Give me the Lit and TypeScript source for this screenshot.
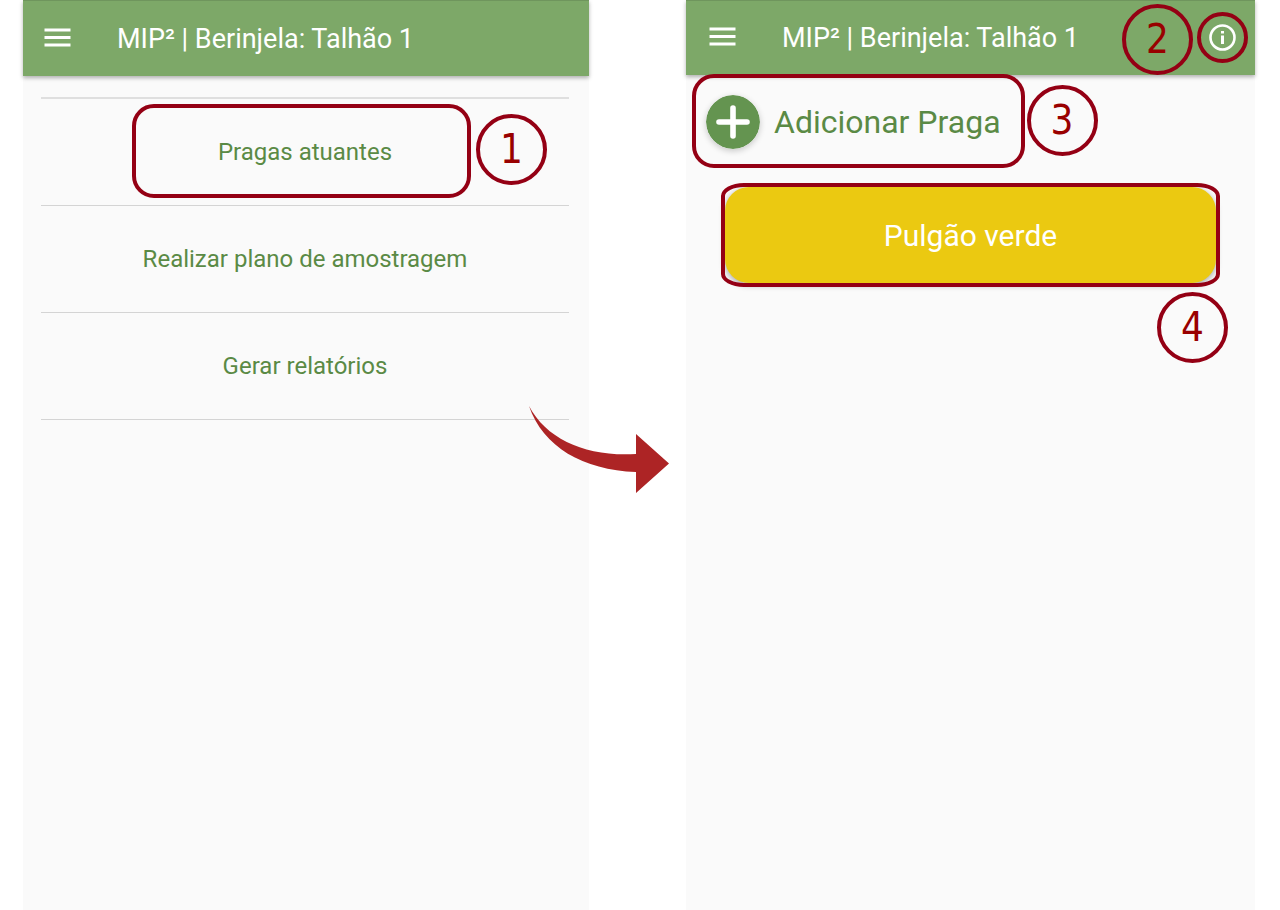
import { LitElement, html, css } from "lit";
import { customElement, property } from "lit/decorators.js";

@customElement("app-bar")
class AppBar extends LitElement {
  @property() heading = "";

  static styles = css`
    :host {
      display: block;
      position: relative;
    }
    .bar {
      box-sizing: border-box;
      display: flex;
      align-items: center;
      gap: 46px;
      height: var(--bar-height, 76px);
      padding: 0 7px 0 var(--bar-inset, 21px);
      background: #7da868;
      border-top: 1px solid #6f955d;
      box-shadow: 0 2px 4px rgba(0, 0, 0, 0.3);
      color: #fff;
    }
    .menu {
      display: flex;
      margin: 0 0 2px;
      padding: 0;
      border: 0;
      background: none;
      color: inherit;
    }
    .title {
      flex: 1;
      margin: 0;
      font-size: 27px;
      line-height: 32px;
      font-weight: 400;
      white-space: nowrap;
    }
  `;

  render() {
    return html`
      <header class="bar">
        <button class="menu" aria-label="Menu">
          <svg width="27" height="20" viewBox="0 0 27 20" fill="currentColor">
            <path d="M0.500 0.500h26v3h-26zM0.500 8h26v3h-26zM0.500 15.500h26v3h-26z" />
          </svg>
        </button>
        <h1 class="title">${this.heading}</h1>
        <slot></slot>
      </header>
    `;
  }
}

@customElement("app-root")
class AppRoot extends LitElement {
  static styles = css`
    :host {
      display: block;
      font-family: Roboto, "Noto Sans", sans-serif;
      background: #fff;
    }
    button {
      font-family: inherit;
      border: 0;
      padding: 0;
      background: none;
      color: #5a8a45;
    }
    .page {
      position: relative;
      box-sizing: border-box;
      display: grid;
      grid-template-columns: 566fr 569fr;
      gap: 97px;
      min-height: 100vh;
      padding: 0 25px 0 23px;
    }
    .screen {
      background: #fafafa;
    }
    .second {
      --bar-height: 75px;
      --bar-inset: 23px;
    }
    .menu-list {
      list-style: none;
      margin: 21px 20px 0 18px;
      padding: 0;
      border-top: 2px solid #dfdfdf;
    }
    .menu-item {
      position: relative;
      border-bottom: 1px solid #d4d4d4;
    }
    .menu-link {
      display: block;
      width: 100%;
      height: 106px;
      font-size: 24px;
      line-height: 32px;
    }
    .ring,
    .mark {
      position: absolute;
      box-sizing: border-box;
      border: 4px solid #940014;
      pointer-events: none;
    }
    .ring {
      border-radius: 22px;
    }
    .mark {
      display: flex;
      justify-content: center;
      align-items: center;
      width: 71px;
      height: 71px;
      padding-bottom: 2px;
      border-radius: 50%;
      font-family: "DejaVu Sans Condensed", "DejaVu Sans", sans-serif;
      font-size: 40px;
      line-height: 48px;
      color: #990000;
    }
    .ring-menu {
      inset: 5px 98px 7px 91px;
    }
    .mark-menu {
      right: 22px;
      top: 15px;
    }
    .info {
      position: relative;
      display: flex;
      margin: 0 0 2px;
      padding: 12px;
      color: #fff;
    }
    .ring-info {
      inset: 0;
      border-radius: 50%;
    }
    .mark-info {
      right: 62px;
      top: 4px;
    }
    .add {
      position: relative;
      width: fit-content;
      margin-left: 6px;
    }
    .add-button {
      display: flex;
      align-items: center;
      gap: 14px;
      height: 93px;
      padding: 0 24px 0 14px;
      font-size: 32px;
      line-height: 40px;
      white-space: nowrap;
    }
    .plus {
      border-radius: 50%;
      box-shadow: 0 2px 6px rgba(0, 0, 0, 0.2);
    }
    .ring-add {
      inset: -1px 0 0;
    }
    .mark-add {
      left: calc(100% + 2px);
      top: 10px;
    }
    .pest {
      position: relative;
      margin: 19px 39px 0 39px;
    }
    .pest-button {
      display: block;
      width: 100%;
      height: 96px;
      padding-top: 2px;
      border-radius: 24px;
      background: #ebc911;
      box-shadow: 0 2px 6px rgba(0, 0, 0, 0.35);
      color: #fff;
      font-size: 30px;
      line-height: 36px;
    }
    .ring-pest {
      inset: -4px;
      border-radius: 23px / 13px;
    }
    .mark-pest {
      right: -12px;
      top: 105px;
    }
    .arrow {
      position: absolute;
      left: calc(50% - 111px);
      top: 406px;
    }
  `;

  render() {
    return html`
      <main class="page">
        <section class="screen">
          <app-bar heading="MIP² | Berinjela: Talhão 1"></app-bar>
          <ul class="menu-list">
            <li class="menu-item">
              <button class="menu-link">Pragas atuantes</button>
              <span class="ring ring-menu"></span>
              <span class="mark mark-menu">1</span>
            </li>
            <li class="menu-item">
              <button class="menu-link">Realizar plano de amostragem</button>
            </li>
            <li class="menu-item">
              <button class="menu-link">Gerar relatórios</button>
            </li>
          </ul>
        </section>

        <section class="screen second">
          <app-bar heading="MIP² | Berinjela: Talhão 1">
            <button class="info" aria-label="Informações">
              <svg width="27" height="27" viewBox="0 0 27 27">
                <circle cx="13.500" cy="13.500" r="12" fill="none" stroke="currentColor" stroke-width="2.600" />
                <path d="M12 7h3v2.600h-3zM12 11.600h3v8.400h-3z" fill="currentColor" />
              </svg>
              <span class="ring ring-info"></span>
            </button>
            <span class="mark mark-info">2</span>
          </app-bar>
          <div class="add">
            <button class="add-button">
              <svg class="plus" width="54" height="54" viewBox="0 0 54 54">
                <circle cx="27" cy="27" r="27" fill="#649450" />
                <path d="M27 13v28M13 27h28" stroke="#fff" stroke-width="5.600" stroke-linecap="round" />
              </svg>
              Adicionar Praga
            </button>
            <span class="ring ring-add"></span>
            <span class="mark mark-add">3</span>
          </div>
          <div class="pest">
            <button class="pest-button">Pulgão verde</button>
            <span class="ring ring-pest"></span>
            <span class="mark mark-pest">4</span>
          </div>
        </section>

        <svg class="arrow" width="140" height="88" viewBox="0 0 140 88" aria-hidden="true">
          <path d="M0 0C18 34 58 51 107 48V28L140 57.500L107 87V66C54 64 14 41 0 0Z" fill="#ad2425" />
        </svg>
      </main>
    `;
  }
}
